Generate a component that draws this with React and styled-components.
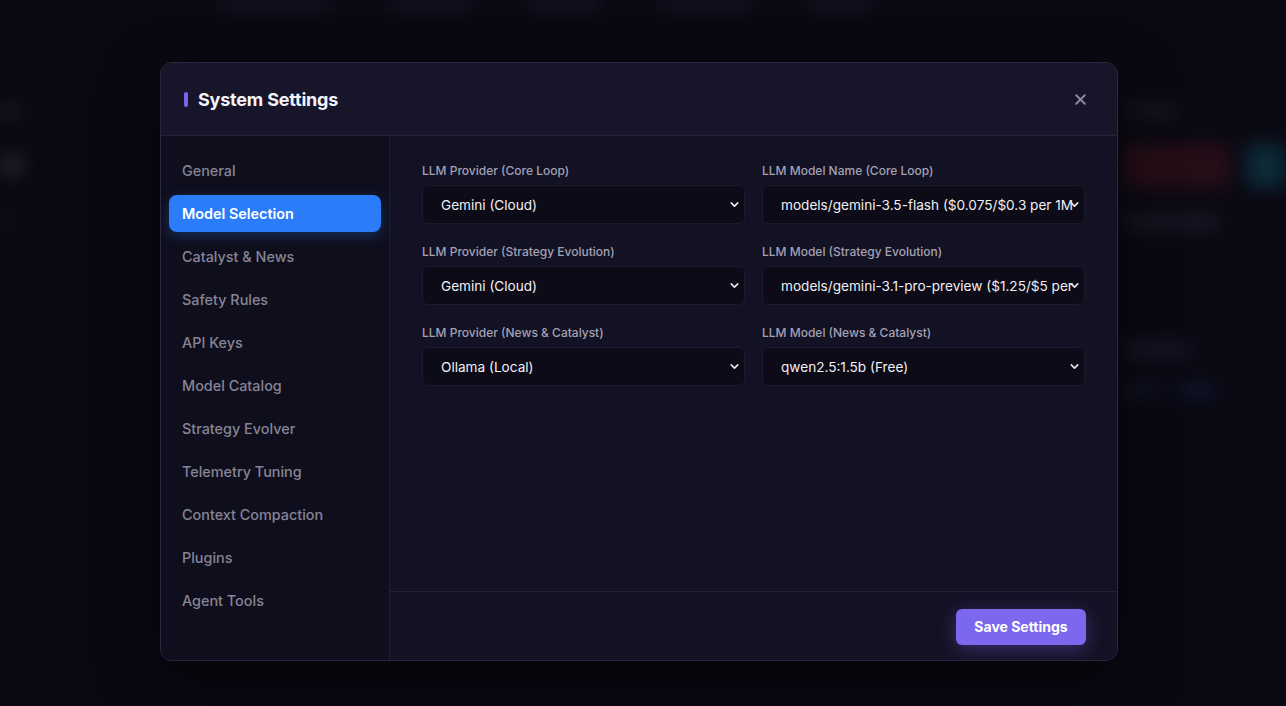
import React from 'react';
import styled, { createGlobalStyle } from 'styled-components';
import { ChevronDown, X } from 'lucide-react';

const GlobalStyle = createGlobalStyle`
    html, body {
        margin: 0;
        padding: 0;
        background: #0a0913;
        font-family: Inter, "Noto Sans", "Liberation Sans", sans-serif;
        overflow: hidden;
    }
    * { box-sizing: border-box; }
`

const Page = styled.div`
    position: relative;
    width: 1286px;
    height: 706px;
    overflow: hidden;
    background: #0a0913;
`

// blurred app behind the modal
const Backdrop = styled.div`
    display: flex;
    flex-direction: column;
    gap: 40px;
    height: 100%;
    filter: blur(9px);
    opacity: 0.55;
`

const FakeNav = styled.div`
    display: flex;
    gap: 60px;
    padding: 0 220px;
    height: 14px;
    align-items: flex-start;
`

const FakePill = styled.div`
    width: ${p => p.w || 90}px;
    height: 8px;
    border-radius: 4px;
    background: #2a2840;
`

const FakeMain = styled.div`
    display: flex;
    justify-content: space-between;
    padding-top: 50px;
`

const FakeColumn = styled.div`
    display: flex;
    flex-direction: column;
    gap: ${p => p.gap || 30}px;
    width: ${p => p.w}px;
    align-items: flex-start;
`

const FakeRow = styled.div`
    display: flex;
    gap: 16px;
`

const Blob = styled.div`
    width: ${p => p.w}px;
    height: ${p => p.h}px;
    border-radius: 8px;
    background: ${p => p.c};
`

const Overlay = styled.div`
    position: absolute;
    inset: 0;
    display: flex;
    align-items: flex-start;
    padding: 62px 0 0 160px;
`

const Modal = styled.div`
    width: 958px;
    height: 599px;
    display: flex;
    flex-direction: column;
    background: #161427;
    border: 1px solid #2a2840;
    border-radius: 12px;
    overflow: hidden;
    box-shadow: 0 20px 60px rgba(0, 0, 0, 0.6);
`

const Header = styled.div`
    height: 73px;
    flex-shrink: 0;
    display: flex;
    align-items: center;
    justify-content: space-between;
    padding: 0 28px 0 23px;
    border-bottom: 1px solid #25233a;
    background: #17152a;
`

const TitleWrap = styled.div`
    display: flex;
    align-items: center;
    gap: 10px;
`

const TitleBar = styled.span`
    width: 4px;
    height: 15px;
    border-radius: 2px;
    background: #7b62f0;
`

const Title = styled.h2`
    margin: 0;
    font-size: 18px;
    font-weight: 700;
    color: #f4f3fa;
    letter-spacing: -0.2px;
`

const CloseButton = styled.button`
    display: flex;
    align-items: center;
    justify-content: center;
    background: none;
    border: none;
    padding: 0;
    color: #8c8a9c;
    cursor: pointer;
`

const Body = styled.div`
    flex: 1;
    display: flex;
    min-height: 0;
`

const Sidebar = styled.nav`
    width: 229px;
    flex-shrink: 0;
    display: flex;
    flex-direction: column;
    gap: 6px;
    padding: 16px 8px;
    background: #0f0e1c;
    border-right: 1px solid #1f1d31;
`

const NavItem = styled.div`
    height: 37px;
    display: flex;
    align-items: center;
    padding: 0 13px;
    border-radius: 8px;
    font-size: 14.4px;
    font-weight: ${p => (p.active ? 600 : 500)};
    color: ${p => (p.active ? '#ffffff' : '#868497')};
    background: ${p => (p.active ? '#2a7cf8' : 'transparent')};
    box-shadow: ${p => (p.active ? '0 4px 14px rgba(42, 124, 248, 0.3)' : 'none')};
`

const Content = styled.div`
    flex: 1;
    display: flex;
    flex-direction: column;
    background: #131124;
`

const Form = styled.div`
    flex: 1;
    display: grid;
    grid-template-columns: 323px 323px;
    column-gap: 17px;
    row-gap: 20px;
    align-content: start;
    padding: 27px 32px 0 32px;
`

const Field = styled.div`
    display: flex;
    flex-direction: column;
    gap: 7px;
`

const Label = styled.label`
    font-size: 12px;
    font-weight: 500;
    color: #a3a1b3;
    line-height: 15px;
`

const SelectWrap = styled.div`
    position: relative;
`

const Select = styled.select`
    appearance: none;
    width: 100%;
    height: 39px;
    padding: 0 10px 0 18px;
    border-radius: 6px;
    border: 1px solid #1c1a2c;
    background: #0c0b17;
    color: #f1f0f6;
    font-family: Inter, "Noto Sans", sans-serif;
    font-size: 13.6px;
    outline: none;
`

const Chevron = styled(ChevronDown)`
    position: absolute;
    right: 4px;
    top: 13px;
    color: #e8e7ef;
    pointer-events: none;
`

const Footer = styled.div`
    height: 69px;
    flex-shrink: 0;
    display: flex;
    align-items: center;
    justify-content: flex-end;
    padding: 1px 31px 0 0;
    border-top: 1px solid #232136;
    background: #141225;
`

const SaveButton = styled.button`
    width: 130px;
    height: 36px;
    border: none;
    border-radius: 6px;
    background: #7b68ee;
    color: #ffffff;
    font-family: Inter, "Noto Sans", sans-serif;
    font-size: 14px;
    font-weight: 700;
    box-shadow: 0 4px 18px rgba(123, 104, 238, 0.35);
    cursor: pointer;
`

const navItems = [
    'General',
    'Model Selection',
    'Catalyst & News',
    'Safety Rules',
    'API Keys',
    'Model Catalog',
    'Strategy Evolver',
    'Telemetry Tuning',
    'Context Compaction',
    'Plugins',
    'Agent Tools',
];

const fields = [
    { label: 'LLM Provider (Core Loop)', value: 'Gemini (Cloud)' },
    { label: 'LLM Model Name (Core Loop)', value: 'models/gemini-3.5-flash ($0.075/$0.3 per 1M tokens)' },
    { label: 'LLM Provider (Strategy Evolution)', value: 'Gemini (Cloud)' },
    { label: 'LLM Model (Strategy Evolution)', value: 'models/gemini-3.1-pro-preview ($1.25/$5 per 1M tokens)' },
    { label: 'LLM Provider (News & Catalyst)', value: 'Ollama (Local)' },
    { label: 'LLM Model (News & Catalyst)', value: 'qwen2.5:1.5b (Free)' },
];

function Background() {
    return (
        <Backdrop>
            <FakeNav>
                <FakePill w={110} />
                <FakePill w={80} />
                <FakePill w={70} />
                <FakePill w={90} />
                <FakePill w={60} />
            </FakeNav>
            <FakeMain>
                <FakeColumn w={40} gap={36}>
                    <Blob w={20} h={14} c="#2a2838" />
                    <Blob w={24} h={22} c="#34323f" />
                    <Blob w={14} h={14} c="#1c1a28" />
                </FakeColumn>
                <FakeColumn w={166} gap={26}>
                    <Blob w={60} h={14} c="#22202e" />
                    <FakeRow>
                        <Blob w={110} h={44} c="#3e121c" />
                        <Blob w={40} h={44} c="#0e4656" />
                    </FakeRow>
                    <Blob w={100} h={16} c="#252333" />
                    <Blob w={60} h={60} c="transparent" />
                    <Blob w={70} h={16} c="#24223a" />
                    <FakeRow>
                        <Blob w={40} h={12} c="#1b2240" />
                        <Blob w={40} h={12} c="#16254a" />
                    </FakeRow>
                </FakeColumn>
            </FakeMain>
        </Backdrop>
    );
}

export default function App() {
    return (
        <Page>
            <GlobalStyle />
            <Background />
            <Overlay>
                <Modal>
                    <Header>
                        <TitleWrap>
                            <TitleBar />
                            <Title>System Settings</Title>
                        </TitleWrap>
                        <CloseButton aria-label="Close">
                            <X size={17} strokeWidth={2.8} />
                        </CloseButton>
                    </Header>
                    <Body>
                        <Sidebar>
                            {navItems.map(item => (
                                <NavItem key={item} active={item === 'Model Selection'}>
                                    {item}
                                </NavItem>
                            ))}
                        </Sidebar>
                        <Content>
                            <Form>
                                {fields.map(f => (
                                    <Field key={f.label}>
                                        <Label>{f.label}</Label>
                                        <SelectWrap>
                                            <Select defaultValue={f.value}>
                                                <option value={f.value}>{f.value}</option>
                                            </Select>
                                            <Chevron size={13} strokeWidth={3} />
                                        </SelectWrap>
                                    </Field>
                                ))}
                            </Form>
                            <Footer>
                                <SaveButton>Save Settings</SaveButton>
                            </Footer>
                        </Content>
                    </Body>
                </Modal>
            </Overlay>
        </Page>
    );
}
